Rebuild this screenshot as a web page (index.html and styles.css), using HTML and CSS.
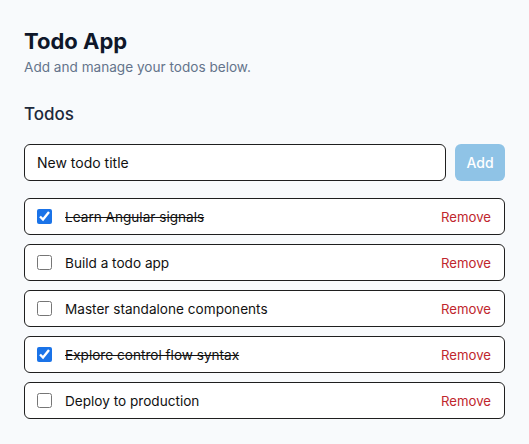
FILE: index.html
```html
<!DOCTYPE html>
<html>
<head>
<meta charset="utf-8">
<link rel="stylesheet" href="styles.css">
</head>
<body>
<main class="app">
  <header class="header">
    <h1 class="title">Todo App</h1>
    <p class="subtitle">Add and manage your todos below.</p>
  </header>
  <section class="todos">
    <h2 class="section-title">Todos</h2>
    <form class="add-form">
      <input class="add-input" type="text" value="New todo title">
      <button class="add-btn" type="button">Add</button>
    </form>
    <ul class="list">
      <li class="item done"><input class="check" type="checkbox" checked><span class="label">Learn Angular signals</span><button class="remove" type="button">Remove</button></li>
      <li class="item"><input class="check" type="checkbox"><span class="label">Build a todo app</span><button class="remove" type="button">Remove</button></li>
      <li class="item"><input class="check" type="checkbox"><span class="label">Master standalone components</span><button class="remove" type="button">Remove</button></li>
      <li class="item done"><input class="check" type="checkbox" checked><span class="label">Explore control flow syntax</span><button class="remove" type="button">Remove</button></li>
      <li class="item"><input class="check" type="checkbox"><span class="label">Deploy to production</span><button class="remove" type="button">Remove</button></li>
    </ul>
  </section>
</main>
</body>
</html>
```
FILE: styles.css
```css
* { box-sizing: border-box; }
html, body { margin: 0; padding: 0; background: #f8fafc; }
body { font-family: Inter, "Noto Sans", sans-serif; color: #0f172a; }
.app { padding: 27px 24px 24px; }
.title { margin: 0; font-size: 22px; font-weight: 700; line-height: 28px; color: #0f172a; }
.subtitle { margin: 3px 0 0; font-size: 13.6px; line-height: 18px; color: #64748b; }
.todos { margin-top: 27px; }
.section-title { margin: 0; font-size: 17px; font-weight: 500; line-height: 22px; color: #1e293b; }
.add-form { display: flex; gap: 9px; margin-top: 19px; }
.add-input { flex: 1; height: 37px; border: 1px solid #1f1f1f; border-radius: 6px; padding: 0 12px; font: 14px Inter, sans-serif; color: #111; background: #fff; }
.add-btn { width: 50px; height: 37px; border: none; border-radius: 6px; background: #8fc3e6; color: #fff; font: 500 14px Inter, sans-serif; }
.list { list-style: none; margin: 17px 0 0; padding: 0; display: flex; flex-direction: column; gap: 9px; }
.item { display: flex; align-items: center; height: 37px; padding: 0 13px 0 12px; background: #fff; border: 1px solid #1f1f1f; border-radius: 6px; }
.check { width: 15px; height: 15px; margin: 0 13px 0 0; accent-color: #1a73e8; }
.label { flex: 1; font-size: 13.6px; color: #111; }
.done .label { text-decoration: line-through; }
.remove { border: none; background: none; padding: 0; color: #c0262d; font: 13.2px Inter, sans-serif; }
```
